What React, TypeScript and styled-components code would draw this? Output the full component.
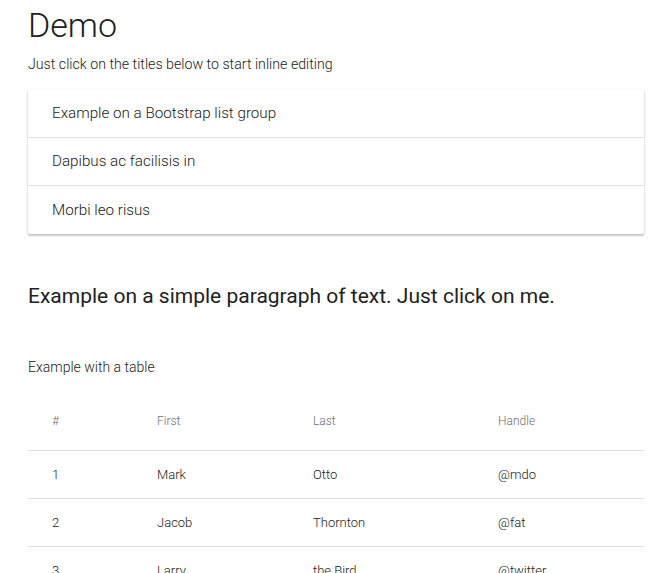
import React from 'react'
import styled, { createGlobalStyle } from 'styled-components'

const GlobalStyle = createGlobalStyle`
    html, body {
        margin: 0;
        padding: 0;
        background: #fff;
    }
    body {
        font-family: Roboto, "Liberation Sans", sans-serif;
        font-weight: 300;
        color: #212529;
    }
`

const Page = styled.div`
    width: 616px;
    padding: 0 0 0 28px;
    box-sizing: content-box;
`
const Title = styled.h1`
    font-size: 34px;
    font-weight: 300;
    line-height: 1.2;
    margin: 5px 0 0;
    color: #212121;
`
const Lead = styled.p`
    font-size: 14.2px;
    line-height: 20px;
    margin: 8px 0 15px;
    color: #212121;
`
const ListGroup = styled.ul`
    list-style: none;
    margin: 0;
    padding: 0;
    background: #fff;
    border-radius: 2px;
    box-shadow: 0 2px 2px 0 rgba(0, 0, 0, 0.14), 0 1px 3px 0 rgba(0, 0, 0, 0.16);
`
const ListItem = styled.li`
    height: 48px;
    box-sizing: border-box;
    padding: 0 24px;
    display: flex;
    align-items: center;
    font-size: 15.2px;
    color: #212121;
    & + & {
        border-top: 1px solid #e0e0e0;
    }
    &:last-child {
        height: 49px;
    }
`
const Paragraph = styled.p`
    font-size: 21px;
    font-weight: 400;
    line-height: 24px;
    margin: 50px 0 0;
    color: #212121;
`
const Caption = styled.p`
    font-size: 14px;
    line-height: 20px;
    margin: 49px 0 0;
    color: #212121;
`
const Table = styled.table`
    width: 616px;
    border-collapse: collapse;
    margin-top: 14px;
    font-size: 13px;
`
const Th = styled.th<{ $w: number }>`
    width: ${({ $w }) => $w}px;
    text-align: left;
    font-weight: 300;
    font-size: 12px;
    color: #6f6f6f;
    height: 60px;
    padding: 0 24px;
    box-sizing: border-box;
    border-bottom: 1px solid #e0e0e0;
`
const Td = styled.td`
    height: 47px;
    padding: 0 24px;
    color: #212121;
    border-bottom: 1px solid #e0e0e0;
`

const items = ['Example on a Bootstrap list group', 'Dapibus ac facilisis in', 'Morbi leo risus']
const columns = [
    { label: '#', w: 105 },
    { label: 'First', w: 156 },
    { label: 'Last', w: 185 },
    { label: 'Handle', w: 170 },
]
const rows = [
    ['1', 'Mark', 'Otto', '@mdo'],
    ['2', 'Jacob', 'Thornton', '@fat'],
    ['3', 'Larry', 'the Bird', '@twitter'],
]

export default function App() {
    return <Page>
        <GlobalStyle />
        <Title>Demo</Title>
        <Lead>Just click on the titles below to start inline editing</Lead>
        <ListGroup>
            {items.map(item => <ListItem key={item}>{item}</ListItem>)}
        </ListGroup>
        <Paragraph>Example on a simple paragraph of text. Just click on me.</Paragraph>
        <Caption>Example with a table</Caption>
        <Table>
            <thead>
                <tr>{columns.map(c => <Th key={c.label} $w={c.w}>{c.label}</Th>)}</tr>
            </thead>
            <tbody>
                {rows.map(r => <tr key={r[0]}>{r.map((cell, i) => <Td key={i}>{cell}</Td>)}</tr>)}
            </tbody>
        </Table>
    </Page>
}
